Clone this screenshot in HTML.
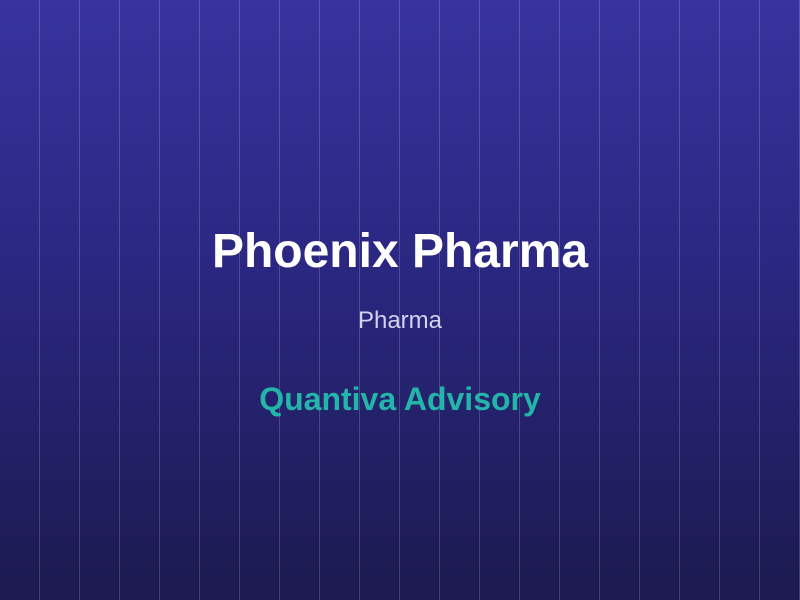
<!DOCTYPE html>
<html><head><style>
html,body{margin:0;padding:0}
body{width:800px;height:600px;overflow:hidden;position:relative;font-family:"Liberation Sans",Arial,sans-serif;
background:linear-gradient(180deg,#38339f 0%,#2a2781 45%,#1c1a4f 100%);}
.lines{position:absolute;inset:0;background-image:linear-gradient(90deg,transparent 0,transparent 39px,rgba(255,255,255,0.17) 39px,rgba(255,255,255,0.17) 41px,transparent 41px);background-size:40px 100%;background-position:0 0}
.t{position:absolute;left:0;width:800px;text-align:center}
</style></head><body>
<div class="lines"></div>
<div class="t" style="top:224px;font-size:48px;font-weight:bold;color:#fff">Phoenix Pharma</div>
<div class="t" style="top:307px;font-size:24px;color:#d4d2f0">Pharma</div>
<div class="t" style="top:381px;font-size:32px;font-weight:bold;color:#22b5a8">Quantiva Advisory</div>
</body></html>
